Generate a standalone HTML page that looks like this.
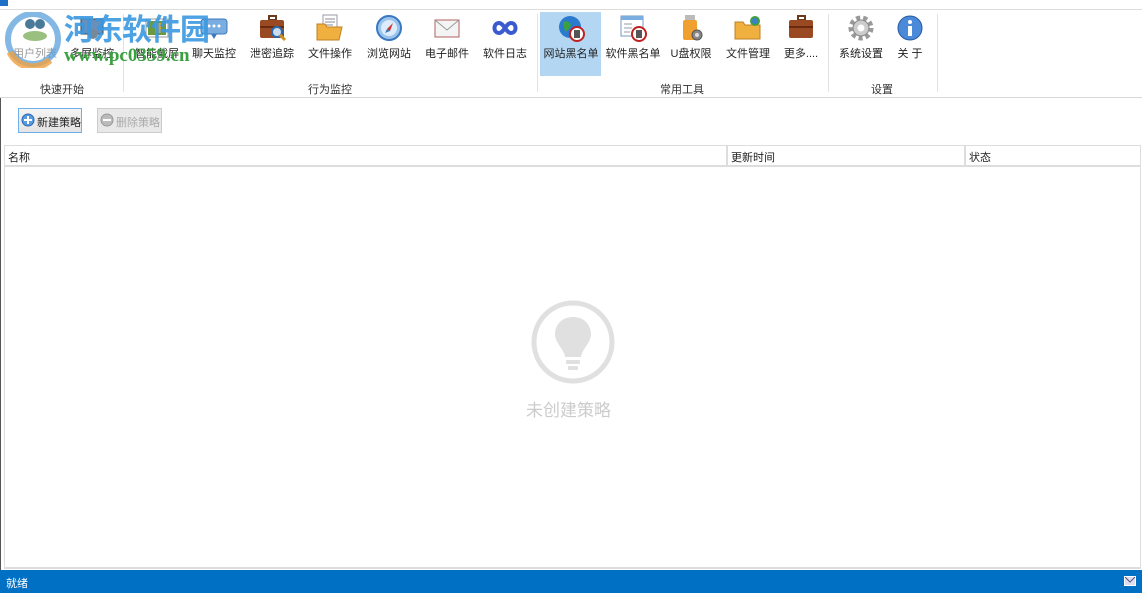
<!DOCTYPE html>
<html><head><meta charset="utf-8"><style>
*{margin:0;padding:0;box-sizing:border-box}
body{width:1142px;height:593px;overflow:hidden;background:#fff;font-family:"Liberation Sans","Noto Sans CJK SC",sans-serif;font-size:11px;color:#222;position:relative}
.a{position:absolute}
.lbl{position:absolute;top:45px;font-size:11px;color:#222;white-space:nowrap;transform:translateX(-50%)}
.ic{position:absolute;top:14px;width:28px;height:28px;transform:translateX(-50%)}
.grp{position:absolute;top:81px;font-size:11px;color:#333;transform:translateX(-50%)}
.sep{position:absolute;top:14px;width:1px;height:78px;background:#e2e2e2}
</style></head><body>
<div class="a" style="left:0;top:0;width:8px;height:6px;background:#1e6fc6"></div>
<div class="a" style="left:0;top:9px;width:1142px;height:1px;background:#ddd"></div>
<div class="a" style="left:0;top:97px;width:1142px;height:1px;background:#d8d8d8"></div>
<div class="a" style="left:0;top:98px;width:1px;height:472px;background:#555"></div>

<div class="a" style="left:540px;top:12px;width:61px;height:64px;background:#b3d7f3"></div>

<div class="sep" style="left:123px"></div>
<div class="sep" style="left:537px"></div>
<div class="sep" style="left:828px"></div>
<div class="sep" style="left:937px"></div>

<!-- icons -->
<div class="ic" style="left:35px"><svg width="28" height="28"><circle cx="9" cy="10" r="5" fill="#4a7a9a"/><circle cx="19" cy="10" r="5" fill="#4a7a9a"/><ellipse cx="14" cy="22" rx="12" ry="5" fill="#9ac080"/></svg></div>
<div class="ic" style="left:92px"><svg width="28" height="28"><rect x="3" y="5" width="22" height="15" fill="#6a8fb8" stroke="#345" /><circle cx="15" cy="20" r="5" fill="#789"/></svg></div>
<div class="ic" style="left:157px"><svg width="28" height="28"><rect x="3" y="5" width="22" height="18" fill="#fff" stroke="#999"/><rect x="5" y="7" width="18" height="14" fill="#6a9a40"/><rect x="12" y="9" width="6" height="10" fill="#d9a030"/></svg></div>
<div class="ic" style="left:214px"><svg width="28" height="28"><rect x="1" y="5" width="26" height="15" rx="3" fill="#7aaee0" stroke="#3d78b8"/><path d="M11 20 L14 25 L17 20Z" fill="#3d78b8"/><circle cx="9" cy="12" r="1.5" fill="#fff"/><circle cx="14" cy="12" r="1.5" fill="#fff"/><circle cx="19" cy="12" r="1.5" fill="#fff"/></svg></div>
<div class="ic" style="left:272px"><svg width="28" height="28"><rect x="11" y="2" width="7" height="4" fill="none" stroke="#6a3a1a" stroke-width="2"/><rect x="2" y="6" width="24" height="18" rx="2" fill="#9a4a22"/><rect x="2" y="12" width="24" height="2" fill="#6a2a10"/><circle cx="19" cy="18" r="5" fill="#cde" stroke="#2a6ab0" stroke-width="2"/><path d="M22 21 L27 26" stroke="#d09020" stroke-width="3"/></svg></div>
<div class="ic" style="left:330px"><svg width="28" height="28"><rect x="7" y="1" width="14" height="17" fill="#fff" stroke="#99a"/><path d="M9 5h10M9 8h10M9 11h8" stroke="#889"/><path d="M1 10 h8 l2 3 h15 l-3 13 h-22z" fill="#f0b040" stroke="#c08020"/></svg></div>
<div class="ic" style="left:389px"><svg width="28" height="28"><circle cx="14" cy="14" r="12" fill="#9ac4ec" stroke="#3a78c0" stroke-width="2"/><circle cx="14" cy="14" r="8" fill="#dcecfa"/><path d="M18 9 L12 15 L15 17Z" fill="#d03030"/><path d="M12 15 L10 19 L15 17Z" fill="#3a78c0"/></svg></div>
<div class="ic" style="left:447px"><svg width="28" height="28"><rect x="2" y="6" width="24" height="17" fill="#f4f4f4" stroke="#b06060"/><path d="M2 6 L14 16 L26 6" fill="none" stroke="#999"/></svg></div>
<div class="ic" style="left:505px"><svg width="28" height="28"><path d="M8 9 C2 9 2 19 8 19 C13 19 15 9 20 9 C26 9 26 19 20 19 C15 19 13 9 8 9Z" fill="none" stroke="#3a5ad0" stroke-width="4"/></svg></div>
<div class="ic" style="left:571px"><svg width="28" height="28"><circle cx="13" cy="13" r="11" fill="#2a7ad0"/><path d="M6 8 q6 -2 8 3 q-2 5 -6 7z" fill="#3aa040"/><circle cx="20" cy="20" r="7" fill="#fff" stroke="#c02020" stroke-width="2"/><rect x="17" y="16" width="6" height="8" fill="#555"/></svg></div>
<div class="ic" style="left:633px"><svg width="28" height="28"><rect x="2" y="2" width="22" height="20" fill="#fff" stroke="#7a9ac0"/><rect x="2" y="2" width="22" height="4" fill="#7aaee0"/><path d="M5 10h8M5 14h8M5 18h6" stroke="#99a"/><circle cx="20" cy="20" r="7" fill="#fff" stroke="#c02020" stroke-width="2"/><rect x="17" y="16" width="6" height="8" fill="#555"/></svg></div>
<div class="ic" style="left:691px"><svg width="28" height="28"><rect x="8" y="1" width="10" height="6" fill="#bbb"/><rect x="6" y="6" width="14" height="20" rx="2" fill="#f0a030"/><circle cx="20" cy="21" r="5" fill="#888" stroke="#555"/><circle cx="20" cy="21" r="2" fill="#ddd"/></svg></div>
<div class="ic" style="left:748px"><svg width="28" height="28"><path d="M1 8 h8 l2 3 h15 v14 h-25z" fill="#f0b040" stroke="#c08020"/><circle cx="21" cy="7" r="5" fill="#40a040"/><circle cx="21" cy="7" r="3" fill="#3a80d0"/></svg></div>
<div class="ic" style="left:801px"><svg width="28" height="28"><rect x="11" y="2" width="7" height="4" fill="none" stroke="#6a3a1a" stroke-width="2"/><rect x="2" y="6" width="24" height="18" rx="2" fill="#9a4a22"/><rect x="2" y="12" width="24" height="2" fill="#6a2a10"/></svg></div>
<div class="ic" style="left:861px"><svg width="28" height="28"><circle cx="14" cy="14" r="10" fill="none" stroke="#999" stroke-width="5" stroke-dasharray="4 3"/><circle cx="14" cy="14" r="8" fill="#ccc" stroke="#888"/><circle cx="14" cy="14" r="3.5" fill="#fff"/></svg></div>
<div class="ic" style="left:910px"><svg width="28" height="28"><circle cx="14" cy="14" r="12" fill="#4a8ad8" stroke="#2a5aa0"/><circle cx="14" cy="8" r="2" fill="#fff"/><rect x="12" y="12" width="4" height="10" fill="#fff"/></svg></div>

<div class="lbl" style="left:35px;color:#999">用户列表</div>
<div class="lbl" style="left:92px">多屏监控</div>
<div class="lbl" style="left:157px">智能截屏</div>
<div class="lbl" style="left:214px">聊天监控</div>
<div class="lbl" style="left:272px">泄密追踪</div>
<div class="lbl" style="left:330px">文件操作</div>
<div class="lbl" style="left:389px">浏览网站</div>
<div class="lbl" style="left:447px">电子邮件</div>
<div class="lbl" style="left:505px">软件日志</div>
<div class="lbl" style="left:571px">网站黑名单</div>
<div class="lbl" style="left:633px">软件黑名单</div>
<div class="lbl" style="left:691px">U盘权限</div>
<div class="lbl" style="left:748px">文件管理</div>
<div class="lbl" style="left:801px">更多....</div>
<div class="lbl" style="left:861px">系统设置</div>
<div class="lbl" style="left:910px">关 于</div>

<div class="grp" style="left:62px">快速开始</div>
<div class="grp" style="left:330px">行为监控</div>
<div class="grp" style="left:682px">常用工具</div>
<div class="grp" style="left:882px">设置</div>

<!-- watermark -->
<svg class="a" style="left:4px;top:12px" width="58" height="56"><circle cx="29" cy="27" r="25" fill="none" stroke="#5aa0dc" stroke-width="6" opacity=".75"/><path d="M6 40 a25 25 0 0 0 40 8" stroke="#f0a040" stroke-width="7" fill="none" opacity=".8"/></svg>
<div class="a" style="left:64px;top:9px;font-size:30px;font-weight:bold;color:#3a98e0;letter-spacing:-1px;opacity:.9;font-family:'Noto Sans CJK SC',sans-serif;line-height:36px">河东软件园</div>
<div class="a" style="left:64px;top:45px;font-size:19px;font-weight:bold;color:#3aa040;font-family:'Liberation Serif',serif;line-height:22px">www.pc0359.cn</div>

<!-- buttons -->
<div class="a" style="left:18px;top:108px;width:64px;height:25px;border:1px solid #6fb0ea;background:linear-gradient(#f4f4f4,#e4e4e4)"></div>
<svg class="a" style="left:21px;top:113px" width="14" height="14"><circle cx="7" cy="7" r="6" fill="#5a9ae0" stroke="#2a6ab0"/><path d="M7 3v8M3 7h8" stroke="#fff" stroke-width="2"/></svg>
<div class="a" style="left:37px;top:114px;font-size:11px">新建策略</div>
<div class="a" style="left:97px;top:108px;width:65px;height:25px;border:1px solid #ccc;background:#e8e8e8"></div>
<svg class="a" style="left:100px;top:113px" width="14" height="14"><circle cx="7" cy="7" r="6" fill="#bbb" stroke="#999"/><path d="M3 7h8" stroke="#fff" stroke-width="2"/></svg>
<div class="a" style="left:116px;top:114px;font-size:11px;color:#aaa">删除策略</div>

<!-- table -->
<div class="a" style="left:4px;top:145px;width:1137px;height:424px;border:1px solid #ddd;border-bottom:2px solid #ddd"></div>
<div class="a" style="left:5px;top:165px;width:1135px;height:2px;background:#ddd"></div>
<div class="a" style="left:726px;top:146px;width:2px;height:19px;background:#ddd"></div>
<div class="a" style="left:964px;top:146px;width:2px;height:19px;background:#ddd"></div>
<div class="a" style="left:8px;top:149px">名称</div>
<div class="a" style="left:731px;top:149px">更新时间</div>
<div class="a" style="left:969px;top:149px">状态</div>

<svg class="a" style="left:530px;top:299px" width="86" height="86"><circle cx="43" cy="43" r="39" fill="none" stroke="#e0e0e0" stroke-width="5"/><path d="M43 18 C30 18 25 28 25 35 C25 44 34 50 35 58 L51 58 C52 50 61 44 61 35 C61 28 56 18 43 18Z" fill="#e0e0e0"/><rect x="36" y="61" width="14" height="4" rx="1" fill="#e0e0e0"/><rect x="38" y="67" width="10" height="4" rx="1" fill="#e0e0e0"/></svg>
<div class="a" style="left:526px;top:396px;font-size:17px;color:#ccc">未创建策略</div>

<!-- status -->
<div class="a" style="left:0;top:570px;width:1142px;height:23px;background:#0070c4"></div>
<div class="a" style="left:6px;top:575px;color:#fff;font-size:11px">就绪</div>
<svg class="a" style="left:1124px;top:576px" width="12" height="10"><rect x=".5" y=".5" width="11" height="9" fill="#dde" stroke="#fff"/><path d="M1 1 L6 6 L11 1" fill="none" stroke="#558"/></svg>
</body></html>
